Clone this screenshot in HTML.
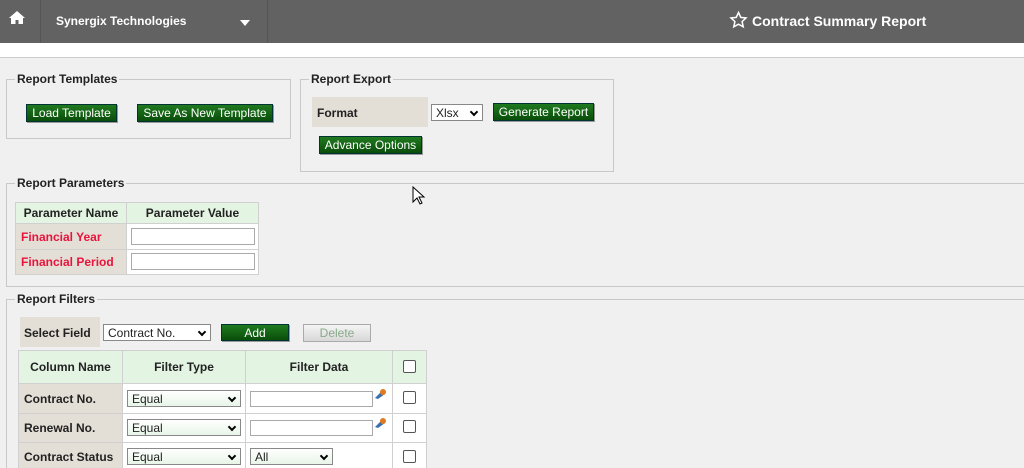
<!DOCTYPE html><html style="width:1024px;height:468px;overflow:hidden"><head><style>
*{box-sizing:border-box;margin:0;padding:0}
body{width:1024px;height:468px;overflow:hidden;background:#f0f0f0;font-family:"Liberation Sans",sans-serif;font-size:12px;position:relative;color:#222}
.a{position:absolute}
.hdr{left:0;top:0;width:1024px;height:43px;background:#626262}
.fs{position:absolute;border:1px solid #c8c8c8}
.lg{position:absolute;top:-8px;left:8px;background:#f0f0f0;padding:0 2px;font-weight:bold;font-size:12px;color:#222}
.btn{position:absolute;height:18px;background:linear-gradient(#1f7a1f,#0a4d0a);color:#fff;font-size:12px;text-align:center;line-height:17px;border:1px solid #033;box-shadow:1px 1px 0 #999}
.sel{position:absolute;height:17px;background:#fff;border:1px solid #888;font-size:12px;line-height:16px;padding-left:4px}
.sel:after{content:"";position:absolute;right:5px;top:4px;width:4px;height:4px;border-right:2px solid #000;border-bottom:2px solid #000;transform:rotate(45deg)}
.g{background:linear-gradient(#fff,#e8f5e8)}
table{border-collapse:collapse;position:absolute}
td{border:1px solid #d0d0d0;font-weight:bold;font-size:12px}
.h{background:#e3f4e3;text-align:center}
.n{background:#e3ded6;padding-left:5px}
.w{background:#fff}
.inp{position:absolute;background:#fff;border:1px solid #aaa;height:17px}
.cb{position:absolute;width:13px;height:13px;border:1px solid #555;border-radius:2px;background:#fff}
</style></head><body>
<div class="a hdr"></div>
<div class="a" style="left:40px;top:0;width:1px;height:43px;background:#555"></div>
<div class="a" style="left:267px;top:0;width:1px;height:43px;background:#555"></div>
<svg class="a" style="left:8px;top:10px" width="18" height="15" viewBox="0 0 18 15"><path d="M9 1L1 8h2v6h4.5v-4h3v4H15V8h2z" fill="#fff"/></svg>
<div class="a" style="left:56px;top:14px;color:#fff;font-weight:bold;font-size:12px">Synergix Technologies</div>
<div class="a" style="left:240px;top:20px;border-left:5px solid transparent;border-right:5px solid transparent;border-top:6px solid #fff"></div>
<svg class="a" style="left:729px;top:11px" width="19" height="18" viewBox="0 0 24 24"><path d="M12 2l3 6.5 7 .8-5.2 4.8 1.5 7L12 17.6 5.7 21.1l1.5-7L2 9.3l7-.8z" fill="none" stroke="#fff" stroke-width="2"/></svg>
<div class="a" style="left:752px;top:13px;color:#fff;font-weight:bold;font-size:14px">Contract Summary Report</div>
<div class="a" style="left:0;top:43px;width:1024px;height:15px;background:#fff;border-bottom:1px solid #ccc"></div>

<div class="fs" style="left:6px;top:79px;width:285px;height:60px"><div class="lg">Report Templates</div></div>
<div class="btn" style="left:26px;top:104px;width:91px">Load Template</div>
<div class="btn" style="left:137px;top:104px;width:136px">Save As New Template</div>

<div class="fs" style="left:300px;top:79px;width:314px;height:93px"><div class="lg">Report Export</div></div>
<div class="a" style="left:312px;top:97px;width:116px;height:30px;background:#e3ded6;font-weight:bold;padding:9px 5px">Format</div>
<div class="sel" style="left:431px;top:104px;width:52px">Xlsx</div>
<div class="btn" style="left:493px;top:103px;width:101px">Generate Report</div>
<div class="btn" style="left:319px;top:136px;width:103px">Advance Options</div>

<div class="fs" style="left:6px;top:183px;width:1030px;height:104px"><div class="lg">Report Parameters</div></div>
<table style="left:15px;top:202px;width:244px">
<tr style="height:21px"><td class="h" style="width:111px">Parameter Name</td><td class="h">Parameter Value</td></tr>
<tr style="height:26px"><td class="n" style="color:#e8143c">Financial Year</td><td class="w"></td></tr>
<tr style="height:25px"><td class="n" style="color:#e8143c">Financial Period</td><td class="w"></td></tr>
</table>
<div class="inp" style="left:131px;top:228px;width:124px"></div>
<div class="inp" style="left:131px;top:253px;width:124px"></div>

<div class="fs" style="left:6px;top:299px;width:1030px;height:169px;border-bottom:none"><div class="lg">Report Filters</div></div>
<div class="a" style="left:20px;top:317px;width:80px;height:30px;background:#e3ded6;font-weight:bold;padding:9px 4px">Select Field</div>
<div class="sel" style="left:103px;top:324px;width:108px">Contract No.</div>
<div class="btn" style="left:221px;top:324px;width:68px;height:17px">Add</div>
<div class="a" style="left:303px;top:324px;width:68px;height:18px;background:linear-gradient(#f4f4f4,#d8d8d8);border:1px solid #aaa;color:#8a8;font-size:12px;text-align:center;line-height:16px">Delete</div>
<table style="left:18px;top:350px;width:409px">
<tr style="height:33px"><td class="h" style="width:104px">Column Name</td><td class="h" style="width:123px">Filter Type</td><td class="h" style="width:147px">Filter Data</td><td class="h"></td></tr>
<tr style="height:30px"><td class="n">Contract No.</td><td class="w"></td><td class="w"></td><td class="w"></td></tr>
<tr style="height:29px"><td class="n">Renewal No.</td><td class="w"></td><td class="w"></td><td class="w"></td></tr>
<tr style="height:29px"><td class="n">Contract Status</td><td class="w"></td><td class="w"></td><td class="w"></td></tr>
</table>
<div class="cb" style="left:403px;top:360px"></div>
<div class="cb" style="left:403px;top:391px"></div>
<div class="cb" style="left:403px;top:420px"></div>
<div class="cb" style="left:403px;top:450px"></div>
<div class="sel g" style="left:127px;top:390px;width:114px">Equal</div>
<div class="sel g" style="left:127px;top:419px;width:114px">Equal</div>
<div class="sel g" style="left:127px;top:448px;width:114px">Equal</div>
<div class="inp" style="left:250px;top:391px;width:123px;height:16px"></div>
<div class="inp" style="left:250px;top:420px;width:123px;height:16px"></div>
<div class="sel g" style="left:250px;top:448px;width:83px">All</div>
<svg class="a" style="left:373px;top:388px" width="14" height="12"><path d="M2 10L9 3l3 3-7 5z" fill="#3a6fb0"/><circle cx="10" cy="4" r="3" fill="#e07a20"/></svg>
<svg class="a" style="left:373px;top:417px" width="14" height="12"><path d="M2 10L9 3l3 3-7 5z" fill="#3a6fb0"/><circle cx="10" cy="4" r="3" fill="#e07a20"/></svg>
<svg class="a" style="left:412px;top:186px" width="14" height="20"><path d="M1 1v15l4-4 3 6 2-1-3-6h5z" fill="#fff" stroke="#000" stroke-width="1"/></svg>
</body></html>
